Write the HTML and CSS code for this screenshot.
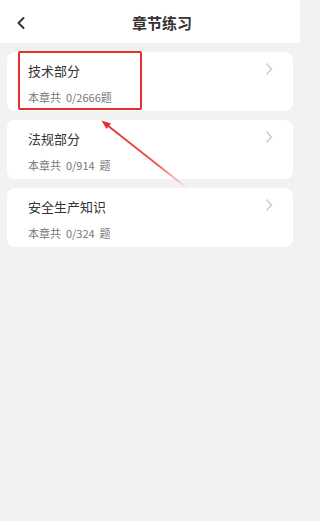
FILE: index.html
```html
<!DOCTYPE html>
<html lang="zh">
<head>
<meta charset="utf-8">
<link rel="stylesheet" href="styles.css">
</head>
<body>
<div class="page">
  <header class="header">
    <div class="back">
      <svg width="10" height="14" viewBox="0 0 10 14"><path d="M7.5 2 L2.5 7 L7.5 12" fill="none" stroke="#333" stroke-width="2" stroke-linecap="round" stroke-linejoin="round"/></svg>
    </div>
    <div class="title">章节练习</div>
    <div class="spacer"></div>
  </header>
  <main class="list">
    <div class="card">
      <div class="info">
        <div class="name">技术部分</div>
        <div class="count">本章共&nbsp;&nbsp;0/2666题</div>
      </div>
      <svg class="chev" width="8" height="14" viewBox="0 0 8 14"><path d="M1.5 1.5 L6.5 7 L1.5 12.5" fill="none" stroke="#c8c8c8" stroke-width="1.3"/></svg>
    </div>
    <div class="card">
      <div class="info">
        <div class="name">法规部分</div>
        <div class="count">本章共&nbsp;&nbsp;0/914&nbsp;&nbsp;题</div>
      </div>
      <svg class="chev" width="8" height="14" viewBox="0 0 8 14"><path d="M1.5 1.5 L6.5 7 L1.5 12.5" fill="none" stroke="#c8c8c8" stroke-width="1.3"/></svg>
    </div>
    <div class="card">
      <div class="info">
        <div class="name">安全生产知识</div>
        <div class="count">本章共&nbsp;&nbsp;0/324&nbsp;&nbsp;题</div>
      </div>
      <svg class="chev" width="8" height="14" viewBox="0 0 8 14"><path d="M1.5 1.5 L6.5 7 L1.5 12.5" fill="none" stroke="#c8c8c8" stroke-width="1.3"/></svg>
    </div>
  </main>
  <div class="highlight"></div>
  <svg class="arrow" width="300" height="521" viewBox="0 0 300 521">
    <defs>
      <linearGradient id="g" x1="187" y1="188" x2="102" y2="121" gradientUnits="userSpaceOnUse">
        <stop offset="0" stop-color="#e8302a" stop-opacity="0"/>
        <stop offset="0.35" stop-color="#e8302a" stop-opacity="0.8"/>
        <stop offset="1" stop-color="#e8302a"/>
      </linearGradient>
    </defs>
    <path d="M187 188 L107 125" stroke="url(#g)" stroke-width="2" fill="none"/>
    <path d="M101.5 120.5 L111 123.5 L106.5 129 Z" fill="#e8302a"/>
  </svg>
</div>
</body>
</html>
```
FILE: styles.css
```css
* { box-sizing: border-box; }
html, body {
  margin: 0;
  padding: 0;
  background: #f2f2f2;
  font-family: "Noto Sans CJK SC", "Noto Sans", sans-serif;
}
.page {
  position: relative;
  width: 300px;
  height: 521px;
  background: #f2f2f2;
}
.header {
  height: 43px;
  background: #fff;
  display: flex;
  align-items: center;
}
.back {
  width: 40px;
  display: flex;
  justify-content: center;
  padding-left: 2px;
  margin-top: 2px;
}
.title {
  flex: 1;
  text-align: center;
  font-size: 15px;
  font-weight: bold;
  color: #333;
  margin-top: 2px;
}
.spacer { width: 16px; }
.list {
  padding: 9px 7px 0 7px;
  display: flex;
  flex-direction: column;
  gap: 9px;
}
.card {
  background: #fff;
  border-radius: 8px;
  height: 59px;
  display: flex;
  justify-content: space-between;
  padding: 10px 21px 0 21px;
}
.name {
  font-size: 13px;
  line-height: 18px;
  color: #333;
}
.count {
  margin-top: 9px;
  font-size: 11px;
  line-height: 16px;
  color: #777;
}
.chev { margin-top: 0px; margin-right: -1px; }
.highlight {
  position: absolute;
  left: 18px;
  top: 51px;
  width: 124px;
  height: 59px;
  border: 2px solid #e8302a;
  border-radius: 2px;
}
.arrow {
  position: absolute;
  left: 0;
  top: 0;
}
```
